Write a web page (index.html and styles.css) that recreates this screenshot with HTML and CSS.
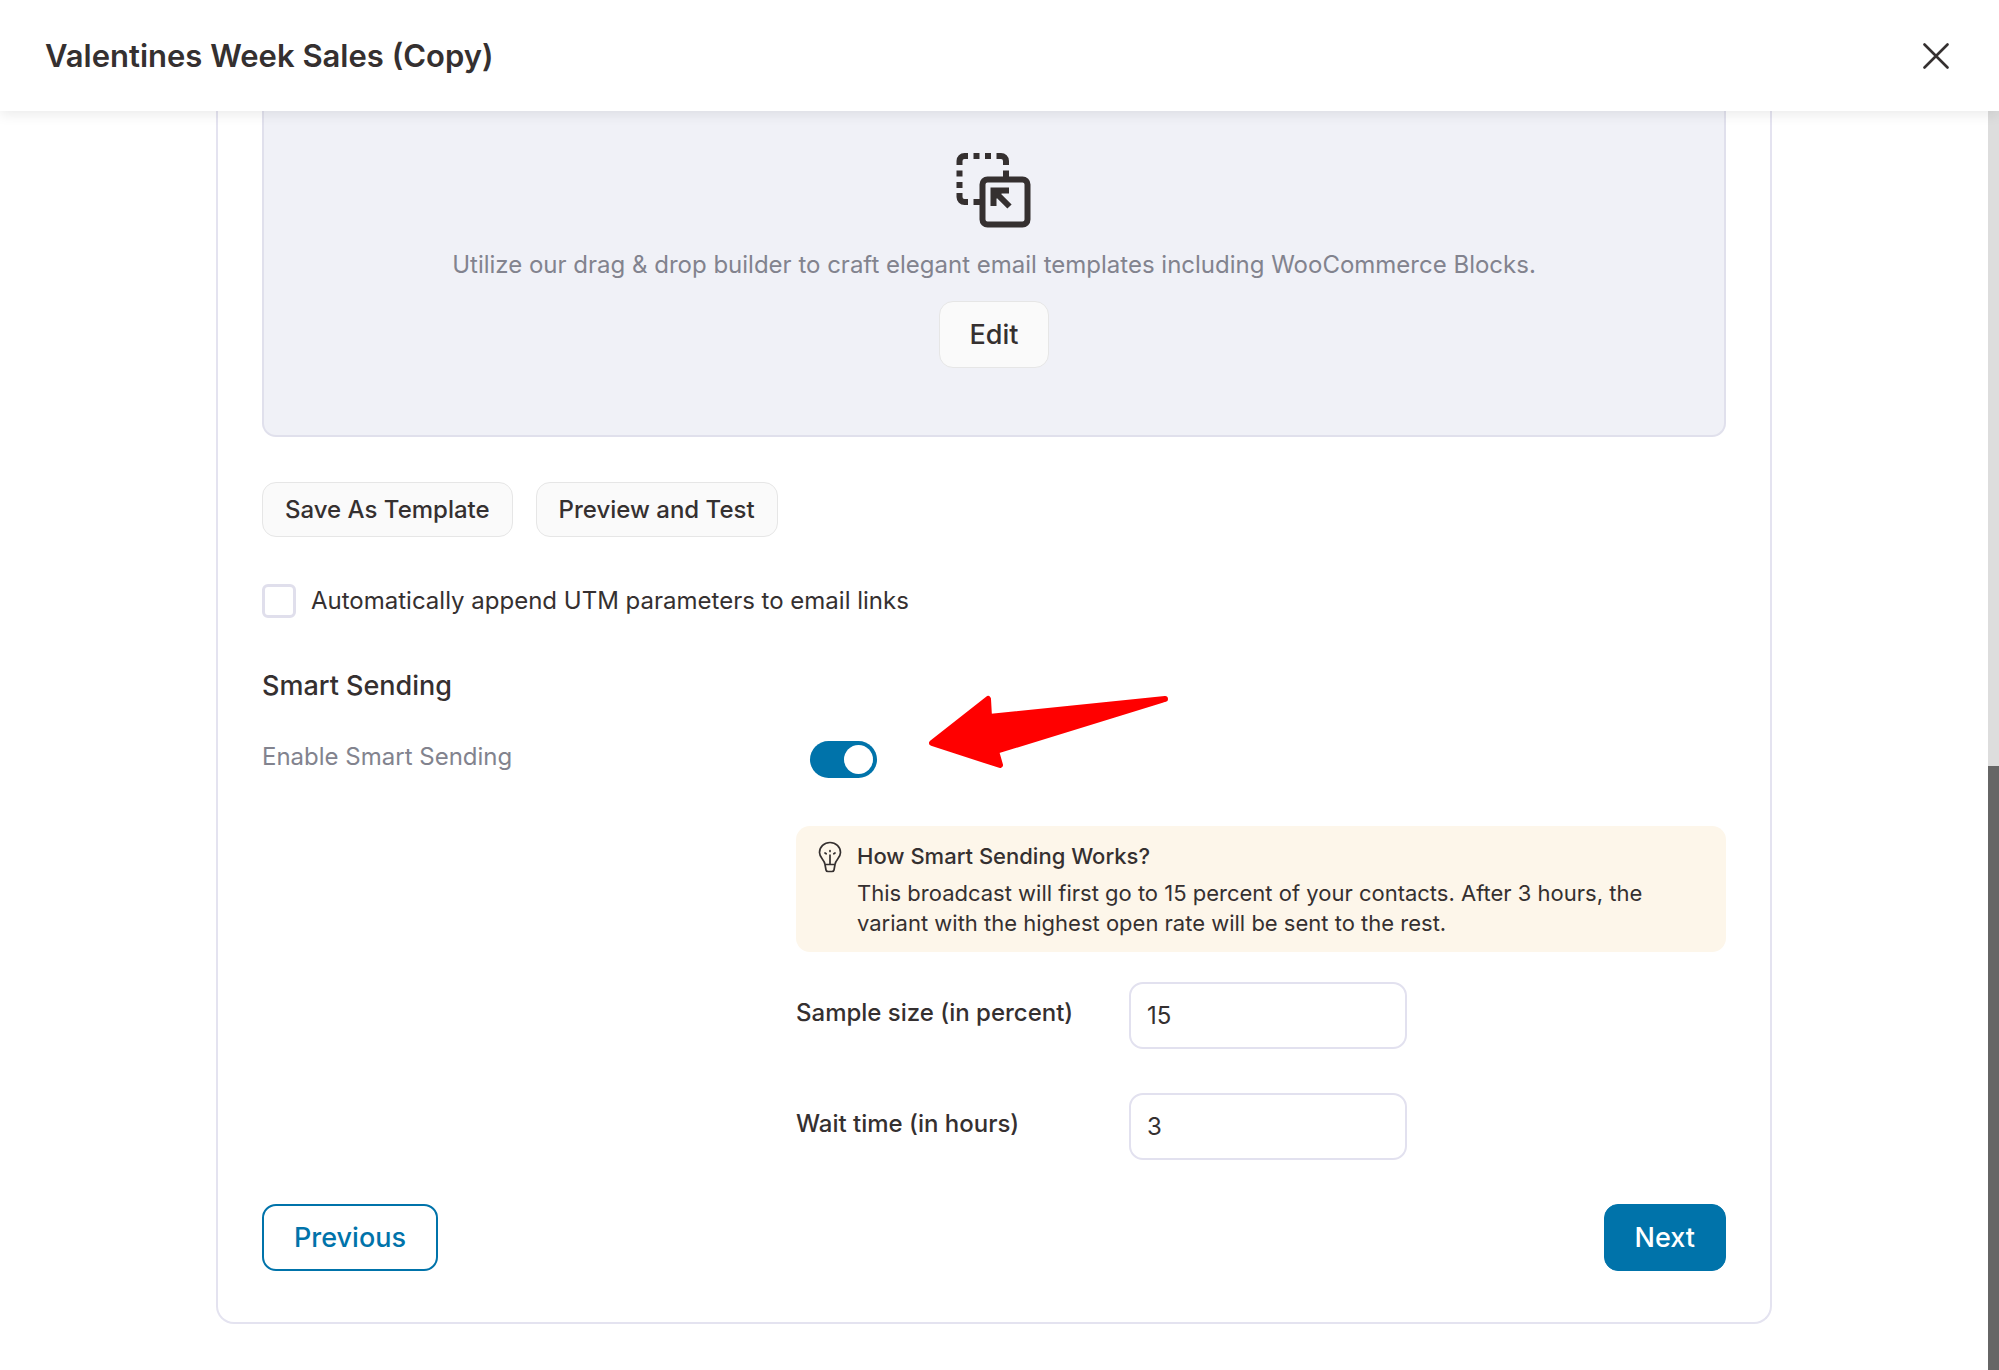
FILE: index.html
```html
<!DOCTYPE html>
<html lang="en">
<head>
  <meta charset="UTF-8">
  <meta name="viewport" content="width=device-width, initial-scale=1">
  <title>Valentines Week Sales (Copy)</title>
  <link rel="stylesheet" href="styles.css">
</head>
<body>

  <header class="topbar">
    <h1>Valentines Week Sales (Copy)</h1>
    <button type="button" class="close" aria-label="Close">
      <svg width="26" height="26" viewBox="0 0 26 26" fill="none" stroke="#353030" stroke-width="2.6" stroke-linecap="round">
        <path d="M1.5 1.5l23 23M24.5 1.5l-23 23"/>
      </svg>
    </button>
  </header>

  <main class="page">
    <form class="card">
      <section class="builder">
        <svg class="builder-icon" width="76" height="76" viewBox="0 0 76 76" fill="none" stroke="#353030" stroke-width="6">
          <path d="M3.5 12V8a5 5 0 0 1 5-5H12M17.500 3h6M29 3h6M40.500 3h4.500a5 5 0 0 1 5 5V12M50 17.500V26M3.500 17.500v6M3.500 29v6M3.500 40v4a5 5 0 0 0 5 5H12M17.500 49H26"/>
          <rect x="26.500" y="26.500" width="45" height="45" rx="5"/>
          <path d="M37.500 53V37.500H53M38.500 38.500l15 15"/>
          <path d="M38 48l10-10H38z" fill="#353030" stroke="none"/>
        </svg>
        <p>Utilize our drag &amp; drop builder to craft elegant email templates including WooCommerce Blocks.</p>
        <button type="button" class="btn btn-large">Edit</button>
      </section>

      <div class="actions">
        <button type="button" class="btn">Save As Template</button>
        <button type="button" class="btn">Preview and Test</button>
      </div>

      <label class="utm">
        <input type="checkbox">
        Automatically append UTM parameters to email links
      </label>

      <h2>Smart Sending</h2>

      <div class="smart">
        <label class="smart-label" for="smart">Enable Smart Sending</label>

        <div class="smart-body">
          <div class="toggle-row">
            <input type="checkbox" class="toggle" id="smart" checked>
            <svg class="arrow" width="244" height="76" viewBox="0 0 244 76" fill="#ff0000" stroke="#ff0000" stroke-width="6" stroke-linejoin="round">
              <path d="M5 50L61 6l1 18L238 6 69 58l4 14z" />
            </svg>
          </div>

          <div class="notice">
            <svg width="24" height="32" viewBox="0 0 24 32" fill="none" stroke="#353030" stroke-width="1.700" stroke-linecap="round" stroke-linejoin="round">
              <path d="M7 23.500C6.500 18.500 1.500 17 1.500 11.500a10.500 10 0 0 1 21 0c0 5.500-5 7-5.500 12zM7 23.500l1 5.500q.3 1.500 2 1.500h4q1.700 0 2-1.500l1-5.500M12 23V14M12 9.500v1M7 12l1.200.8M17 12l-1.200.8"/>
            </svg>
            <div>
              <h3>How Smart Sending Works?</h3>
              <p>This broadcast will first go to 15 percent of your contacts. After 3 hours, the variant with the highest open rate will be sent to the rest.</p>
            </div>
          </div>

          <div class="field">
            <label for="sample">Sample size (in percent)</label>
            <input type="text" id="sample" value="15">
          </div>
          <div class="field">
            <label for="wait">Wait time (in hours)</label>
            <input type="text" id="wait" value="3">
          </div>
        </div>
      </div>

      <footer class="nav">
        <button type="button" class="btn btn-large btn-outline">Previous</button>
        <button type="submit" class="btn btn-large btn-primary">Next</button>
      </footer>
    </form>

    <div class="scrollbar"><div class="thumb"></div></div>
  </main>

</body>
</html>
```
FILE: styles.css
```css
* {
  box-sizing: border-box;
}
body {
  margin: 0;
  min-height: 100vh;
  display: flex;
  flex-direction: column;
  font-family: Inter, "Liberation Sans", sans-serif;
  font-size: 24px;
  line-height: 32px;
  color: #353030;
  background: #fff;
}
h1, h2, h3, p {
  margin: 0;
}
button, input {
  font: inherit;
  color: inherit;
}

.topbar {
  position: relative;
  z-index: 1;
  display: flex;
  align-items: center;
  justify-content: space-between;
  height: 111px;
  padding: 0 50px 0 45px;
  background: #fff;
  box-shadow: 0 4px 12px rgba(0,0,0,0.08);
}
.topbar h1 {
  font-size: 31px;
  line-height: 40px;
  font-weight: 600;
}
.close {
  display: flex;
  padding: 0;
  border: none;
  background: none;
}

.page {
  position: relative;
  flex: 1;
  padding: 0 227px 45px 216px;
}
.card {
  border: 2px solid #e4e3f0;
  border-top: none;
  border-radius: 0 0 18px 18px;
  padding: 0 44px 51px;
}

.builder {
  display: flex;
  flex-direction: column;
  align-items: center;
  gap: 20px;
  padding: 42px 20px 67px;
  background: #f0f1f7;
  border: 2px solid #e0e0ec;
  border-top: none;
  border-radius: 0 0 14px 14px;
  color: #82838e;
  text-align: center;
}

.btn {
  height: 55px;
  padding: 0 22px;
  border: 1px solid #e6e6e6;
  border-radius: 14px;
  background: #fafafa;
  color: #353030;
  font-weight: 500;
}
.btn-large {
  height: 67px;
  padding: 0 30px;
  font-size: 27px;
}
.btn-outline {
  border: 2px solid #0073aa;
  background: #fff;
  color: #0073aa;
}
.btn-primary {
  border-color: #0073aa;
  background: #0073aa;
  color: #fff;
}

.actions {
  display: flex;
  gap: 23px;
  margin-top: 45px;
}

.utm {
  display: flex;
  align-items: center;
  gap: 15px;
  margin-top: 47px;
}
.utm input {
  appearance: none;
  width: 34px;
  height: 34px;
  margin: 0;
  border: 3px solid #e0dfec;
  border-radius: 6px;
  background: #fff;
}

.card h2 {
  margin-top: 52px;
  font-size: 27px;
  line-height: 32px;
  font-weight: 500;
}

.smart {
  display: flex;
  margin-top: 39px;
}
.smart-label {
  width: 534px;
  color: #82838e;
}
.smart-body {
  flex: 1;
}
.toggle-row {
  position: relative;
  display: flex;
  padding-left: 14px;
}
.toggle {
  appearance: none;
  display: flex;
  justify-content: flex-end;
  width: 67px;
  height: 37px;
  margin: 0;
  padding: 4px;
  border-radius: 19px;
  background: #0073aa;
}
.toggle::before {
  content: "";
  width: 29px;
  height: 29px;
  border-radius: 50%;
  background: #fff;
}
.arrow {
  position: absolute;
  left: 131px;
  top: -48px;
}

.notice {
  display: flex;
  gap: 15px;
  margin-top: 48px;
  padding: 15px 20px 14px 22px;
  border-radius: 14px;
  background: #fdf6ea;
  font-size: 22px;
  line-height: 30px;
}
.notice svg {
  flex: none;
}
.notice h3 {
  margin-bottom: 7px;
  font-size: 22px;
  line-height: 30px;
  font-weight: 500;
}

.field {
  display: flex;
  margin-top: 30px;
}
.field + .field {
  margin-top: 44px;
}
.field label {
  width: 333px;
  padding-top: 15px;
  font-weight: 500;
}
.field input {
  width: 278px;
  height: 67px;
  padding: 0 16px;
  border: 2px solid #e2e1ef;
  border-radius: 14px;
  background: #fff;
}

.nav {
  display: flex;
  justify-content: space-between;
  margin-top: 44px;
}

.scrollbar {
  position: absolute;
  top: 0;
  right: 0;
  bottom: 0;
  display: flex;
  align-items: flex-end;
  width: 11px;
  background: #ddd;
}
.thumb {
  width: 100%;
  height: 48%;
  background: #666;
}
```
